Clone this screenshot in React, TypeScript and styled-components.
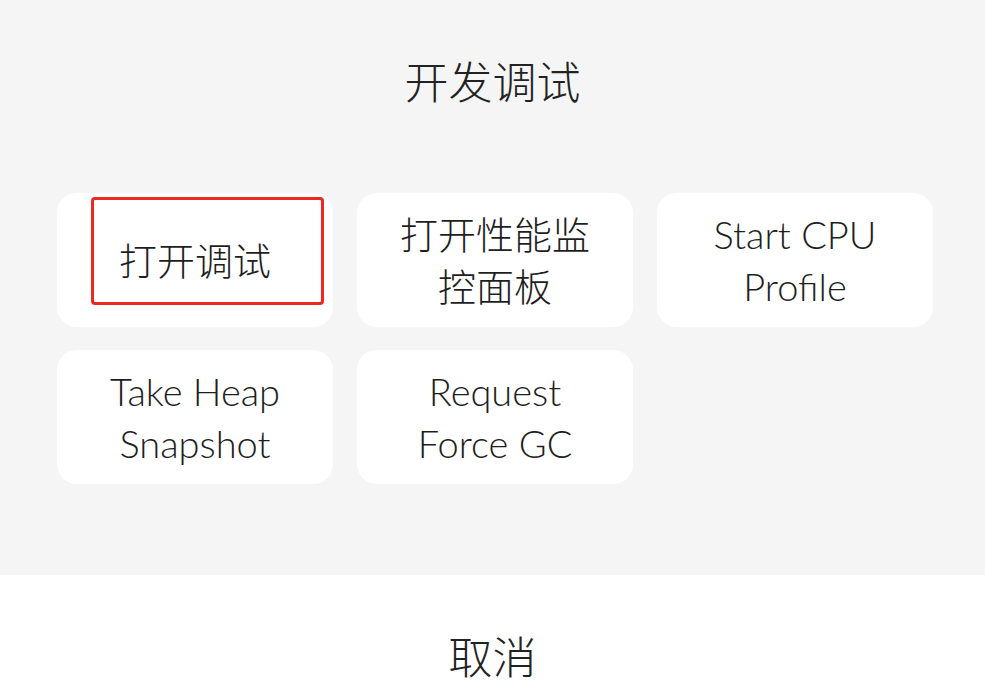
import React from 'react';
import styled, { createGlobalStyle } from 'styled-components';

const GlobalStyle = createGlobalStyle`
  html, body {
    margin: 0;
    padding: 0;
    background: #f5f5f5;
  }
  body {
    font-family: Lato, "Noto Sans CJK SC", sans-serif;
    color: #222222;
  }
`;

const Sheet = styled.div`
  width: 985px;
  height: 700px;
  display: flex;
  flex-direction: column;
  background: #f5f5f5;
  overflow: hidden;
`;

const Header = styled.div`
  height: 160px;
  display: flex;
  align-items: center;
  justify-content: center;
`;

const Title = styled.h1`
  margin: 0;
  font-size: 44px;
  font-weight: 300;
  color: #222222;
  font-family: "Noto Sans CJK SC", sans-serif;
`;

const Grid = styled.div`
  margin-top: 33px;
  padding-left: 57px;
  display: grid;
  grid-template-columns: repeat(3, 276px);
  column-gap: 24px;
  row-gap: 23px;
`;

const Card = styled.div`
  position: relative;
  height: 134px;
  background: #ffffff;
  border-radius: 20px;
  display: flex;
  align-items: center;
  justify-content: center;
  text-align: center;
  font-size: 38px;
  font-weight: 300;
  line-height: 52px;
  color: #1e1e1e;
`;

const Highlight = styled.div`
  position: absolute;
  left: 34px;
  top: 4px;
  width: 233px;
  height: 108px;
  border: 3px solid #ec2a22;
  border-radius: 4px;
  box-sizing: border-box;
`;

const Spacer = styled.div`
  flex: 1;
`;

const Footer = styled.div`
  height: 125px;
  background: #ffffff;
  display: flex;
  justify-content: center;
  padding-top: 56px;
  box-sizing: border-box;
`;

const Cancel = styled.span`
  font-size: 44px;
  font-weight: 300;
  line-height: 48px;
  font-family: "Noto Sans CJK SC", sans-serif;
  color: #222222;
`;

const actions = [
  { label: ['打开调试'], marked: true },
  { label: ['打开性能监', '控面板'] },
  { label: ['Start CPU', 'Profile'] },
  { label: ['Take Heap', 'Snapshot'] },
  { label: ['Request', 'Force GC'] },
];

export default function App() {
  return (
    <>
      <GlobalStyle />
      <Sheet>
        <Header>
          <Title>开发调试</Title>
        </Header>
        <Grid>
          {actions.map((a, i) => (
            <Card key={i}>
              {a.marked && <Highlight />}
              <div>
                {a.label.map((l, j) => (
                  <div key={j}>{l}</div>
                ))}
              </div>
            </Card>
          ))}
        </Grid>
        <Spacer />
        <Footer>
          <Cancel>取消</Cancel>
        </Footer>
      </Sheet>
    </>
  );
}
